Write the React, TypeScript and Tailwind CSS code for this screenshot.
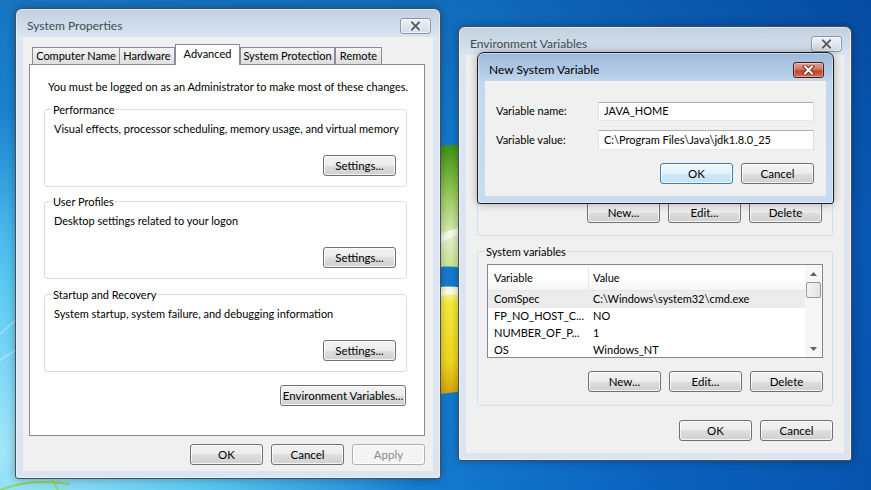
import type { ReactNode } from 'react';

type BtnProps = {
  label: string;
  width?: string;
  disabled?: boolean;
  isDefault?: boolean;
};

function Button({ label, width = 'w-[73px]', disabled = false, isDefault = false }: BtnProps) {
  const look = disabled
    ? 'border-[#adb2b5] bg-[#f4f4f4] text-[#8a8a8a]'
    : isDefault
    ? 'border-[#3c7fb1] bg-[linear-gradient(#eef7fd_0%,#e2f1fb_50%,#d0e8f8_50%,#c4e1f5_100%)] text-black'
    : 'border-[#707070] bg-[linear-gradient(#f3f3f3_0%,#ececec_50%,#dedede_50%,#d0d0d0_100%)] text-black';
  return (
    <button
      className={`h-[21px] shrink-0 whitespace-nowrap rounded-[3px] border ${width} ${look} text-[11.5px] leading-none shadow-[inset_0_0_0_1px_rgba(255,255,255,0.75)]`}
    >
      {label}
    </button>
  );
}

function XGlyph({ fg, halo }: { fg: string; halo: string }) {
  return (
    <svg width="13" height="10" viewBox="0 0 13 10">
      <path d="M3 1.5 L10 8.5 M10 1.5 L3 8.5" stroke={halo} strokeWidth="4" strokeLinecap="square" />
      <path d="M3 1.5 L10 8.5 M10 1.5 L3 8.5" stroke={fg} strokeWidth="2" strokeLinecap="square" />
    </svg>
  );
}

function CloseButton({ active }: { active: boolean }) {
  if (active) {
    return (
      <div className="flex h-[16px] w-[31px] items-center justify-center rounded-[3px] border border-[#47201a] bg-[linear-gradient(#e6a395_0%,#d67565_45%,#c2422d_55%,#d26e58_100%)] shadow-[inset_0_0_0_1px_rgba(255,255,255,0.35)]">
        <XGlyph fg="#ffffff" halo="#7a3025" />
      </div>
    );
  }
  return (
    <div className="flex h-[16px] w-[31px] items-center justify-center rounded-[3px] border border-[#8896a8] bg-[linear-gradient(#eef2f7_0%,#dfe6ee_50%,#d3dce7_100%)] shadow-[inset_0_0_0_1px_rgba(255,255,255,0.6)]">
      <XGlyph fg="#58626f" halo="#f4f6f9" />
    </div>
  );
}

function Frame({
  title,
  active = false,
  className,
  children,
}: {
  title: string;
  active?: boolean;
  className: string;
  children: ReactNode;
}) {
  const look = active
    ? 'border-[#1a1a1a] bg-[linear-gradient(#9db9da_0px,#b4cce7_20px,#c3d8ee_29px,#c7dcf1_100%)]'
    : 'border-[#474d55] bg-[linear-gradient(#c1d0e1_0px,#d2deeb_20px,#dbe6f2_29px,#dae5f1_100%)]';
  return (
    <div
      className={`absolute flex flex-col rounded-t-[7px] rounded-b-[3px] border ${look} shadow-[0_0_10px_rgba(0,0,0,0.3),inset_0_0_0_1px_rgba(255,255,255,0.45)] ${className}`}
    >
      <div className="flex h-[28px] shrink-0 items-start justify-between pl-[11px] pr-[9px] pt-[9px]">
        <span className={`-mt-px whitespace-nowrap text-[12px] leading-[17px] ${active ? 'text-black' : 'text-[#434b55]'}`}>
          {title}
        </span>
        <CloseButton active={active} />
      </div>
      <div className="flex min-h-0 flex-1 flex-col px-[7px] pb-[7px]">
        <div className="flex min-h-0 flex-1 flex-col bg-[#f0f0f0]">{children}</div>
      </div>
    </div>
  );
}

function GroupBox({
  label,
  className,
  children,
}: {
  label?: string;
  className: string;
  children: ReactNode;
}) {
  return (
    <div className={`relative flex flex-col rounded-[3px] border border-[#d5dfe5] ${className}`}>
      {label && (
        <span className="absolute -top-[8px] left-[7px] whitespace-nowrap bg-inherit px-[1px] leading-[15px]">
          {label}
        </span>
      )}
      {children}
    </div>
  );
}

const tabs = [
  { label: 'Computer Name', cls: 'w-[88px]' },
  { label: 'Hardware', cls: 'w-[56px] -ml-px' },
  { label: 'Advanced', cls: 'w-[65px]', selected: true },
  { label: 'System Protection', cls: 'w-[95px]' },
  { label: 'Remote', cls: 'w-[47px]' },
];

const sections = [
  {
    title: 'Performance',
    text: 'Visual effects, processor scheduling, memory usage, and virtual memory',
    gap: 'mt-[15px]',
  },
  { title: 'User Profiles', text: 'Desktop settings related to your logon', gap: 'mt-[14px]' },
  {
    title: 'Startup and Recovery',
    text: 'System startup, system failure, and debugging information',
    gap: 'mt-[15px]',
  },
];

const sysVars = [
  { name: 'ComSpec', value: 'C:\\Windows\\system32\\cmd.exe', selected: true },
  { name: 'FP_NO_HOST_C...', value: 'NO' },
  { name: 'NUMBER_OF_P...', value: '1' },
  { name: 'OS', value: 'Windows_NT' },
];

function Arrow({ down = false }: { down?: boolean }) {
  return (
    <svg width="7" height="4" viewBox="0 0 7 4">
      <path d={down ? 'M0 0 L7 0 L3.5 4 Z' : 'M0 4 L3.5 0 L7 4 Z'} fill="#606060" />
    </svg>
  );
}

function SystemProperties() {
  return (
    <Frame title="System Properties" className="left-[15px] top-[8px] h-[471px] w-[426px]">
      <div className="flex flex-col pl-[6px] pr-[8px] pt-[7px]">
        {/* Tabs */}
        <div className="relative z-10 -mb-px flex h-[21px] items-end pl-[3px]">
          {tabs.map((t) =>
            t.selected ? (
              <div
                key={t.label}
                className={`flex h-[21px] items-center justify-center whitespace-nowrap border border-b-0 border-[#898c95] bg-white pb-[2px] ${t.cls}`}
              >
                {t.label}
              </div>
            ) : (
              <div
                key={t.label}
                className={`flex h-[18px] items-center justify-center whitespace-nowrap border border-[#898c95] bg-[linear-gradient(#f4f4f4_0%,#e9e9e9_50%,#dedede_100%)] ${t.cls}`}
              >
                {t.label}
              </div>
            )
          )}
        </div>

        {/* Panel */}
        <div className="flex h-[372px] flex-col border border-[#898c95] bg-white pl-[14px] pr-[17px] pt-[14px]">
          <p className="whitespace-nowrap pl-[4px] leading-[15px]">
            You must be logged on as an Administrator to make most of these changes.
          </p>
          {sections.map((s) => (
            <GroupBox
              key={s.title}
              label={s.title}
              className={`h-[78px] bg-white pb-[10px] pl-[9px] pr-[10px] pt-[11px] ${s.gap}`}
            >
              <p className="whitespace-nowrap leading-[15px]">{s.text}</p>
              <div className="mt-auto flex justify-end">
                <Button label="Settings..." />
              </div>
            </GroupBox>
          ))}
          <div className="mr-[1px] mt-[13px] flex justify-end">
            <Button label="Environment Variables..." width="w-[126px]" />
          </div>
        </div>

        <div className="mt-[8px] flex justify-end gap-[8px]">
          <Button label="OK" />
          <Button label="Cancel" />
          <Button label="Apply" disabled />
        </div>
      </div>
    </Frame>
  );
}

function EnvironmentVariables() {
  return (
    <Frame title="Environment Variables" className="left-[458px] top-[26px] h-[435px] w-[394px]">
      <div className="flex flex-col px-[11px] pt-[10px]">
        {/* user variables: almost fully covered by the dialog */}
        <GroupBox className="h-[171px] bg-[#f0f0f0] pb-[12px] pl-[9px] pr-[10px] pt-[12px]">
          <div className="h-[94px] border border-[#828790] bg-white" />
          <div className="mt-auto flex justify-end gap-[8px]">
            <Button label="New..." />
            <Button label="Edit..." />
            <Button label="Delete" />
          </div>
        </GroupBox>

        <GroupBox label="System variables" className="mt-[15px] h-[155px] bg-[#f0f0f0] px-[9px] pt-[12px]">
          <div className="flex h-[94px] overflow-hidden border border-[#828790] bg-white">
            <div className="flex min-w-0 flex-1 flex-col">
              <div className="flex h-[26px] shrink-0 items-center border-b border-[#e5e5e5] bg-[linear-gradient(#ffffff_0%,#ffffff_55%,#f4f5f7_100%)] pt-[2px]">
                <div className="flex h-full w-[101px] items-center border-r border-[#e5e5e5] pl-[6px]">Variable</div>
                <div className="pl-[4px]">Value</div>
              </div>
              {sysVars.map((v) => (
                <div
                  key={v.name}
                  className={`flex h-[17px] shrink-0 items-center whitespace-nowrap ${v.selected ? 'bg-[#ececec]' : ''}`}
                >
                  <div className="w-[101px] pl-[6px]">{v.name}</div>
                  <div className="pl-[4px]">{v.value}</div>
                </div>
              ))}
            </div>
            {/* Scrollbar */}
            <div className="flex w-[17px] shrink-0 flex-col bg-[#f6f6f6]">
              <div className="flex h-[17px] items-center justify-center">
                <Arrow />
              </div>
              <div className="mx-[1px] h-[16px] rounded-[2px] border border-[#979797] bg-[linear-gradient(90deg,#f3f3f3,#e2e2e2)]" />
              <div className="flex-1" />
              <div className="flex h-[17px] items-center justify-center">
                <Arrow down />
              </div>
            </div>
          </div>
          <div className="mt-[13px] flex justify-end gap-[8px]">
            <Button label="New..." />
            <Button label="Edit..." />
            <Button label="Delete" />
          </div>
        </GroupBox>

        <div className="mt-[14px] flex justify-end gap-[8px]">
          <Button label="OK" />
          <Button label="Cancel" />
        </div>
      </div>
    </Frame>
  );
}

function NewSystemVariable() {
  return (
    <Frame title="New System Variable" active className="left-[477px] top-[52px] z-20 h-[152px] w-[357px]">
      <div className="flex flex-col pl-[11px] pr-[12px] pt-[21px]">
        <div className="flex h-[19px] items-center">
          <span className="w-[102px] shrink-0 whitespace-nowrap">Variable name:</span>
          <div className="flex h-full w-[219px] items-center whitespace-nowrap border border-[#abadb3] border-b-[#e3e9ef] border-l-[#e2e3ea] border-r-[#dbdfe6] bg-white pl-[5px]">
            JAVA_HOME
          </div>
        </div>
        <div className="mt-[9px] flex h-[20px] items-center">
          <span className="w-[102px] shrink-0 whitespace-nowrap">Variable value:</span>
          <div className="flex h-full w-[219px] items-center whitespace-nowrap border border-[#abadb3] border-b-[#e3e9ef] border-l-[#e2e3ea] border-r-[#dbdfe6] bg-white pl-[5px]">
            C:\Program Files\Java\jdk1.8.0_25
          </div>
        </div>
        <div className="mt-[13px] flex justify-end gap-[8px]">
          <Button label="OK" isDefault />
          <Button label="Cancel" />
        </div>
      </div>
    </Frame>
  );
}

function Wallpaper() {
  return (
    <svg className="absolute inset-0" width="871" height="490" viewBox="0 0 871 490">
      <defs>
        <linearGradient id="leaf" x1="0" y1="0" x2="0" y2="1">
          <stop offset="0" stopColor="#3d9216" />
          <stop offset="0.4" stopColor="#9ccd5c" />
          <stop offset="0.75" stopColor="#e4f2c2" />
          <stop offset="1" stopColor="#c6e48c" />
        </linearGradient>
        <linearGradient id="sun" x1="0" y1="0" x2="0" y2="1">
          <stop offset="0" stopColor="#fffbe0" />
          <stop offset="0.15" stopColor="#f8ec3c" />
          <stop offset="0.7" stopColor="#f2d81e" />
          <stop offset="1" stopColor="#d8a60c" />
        </linearGradient>
      </defs>
      <path d="M420 154 Q450 138 480 150 L480 272 Q450 262 420 270 Z" fill="url(#leaf)" />
      <path d="M424 252 Q450 226 478 232" stroke="#ffffff" strokeOpacity="0.75" strokeWidth="7" fill="none" />
      <path d="M420 290 Q450 282 480 292 L480 386 Q450 396 420 394 Z" fill="url(#sun)" />
      <path d="M424 300 Q450 286 478 296" stroke="#ffffff" strokeOpacity="0.7" strokeWidth="5" fill="none" />
      <path d="M0 334 L18 318 M0 360 L16 350" stroke="#ffffff" strokeOpacity="0.35" strokeWidth="1.5" />
      <path d="M0 490 Q30 478 70 484" stroke="#8fd44c" strokeWidth="2" fill="none" />
      <path d="M52 480 L58 490" stroke="#8fd44c" strokeWidth="1.5" />
    </svg>
  );
}

export default function App() {
  return (
    <div className="relative h-[490px] w-[871px] overflow-hidden bg-[linear-gradient(180deg,rgba(0,30,100,0.22)_0%,rgba(0,30,100,0)_45%),radial-gradient(ellipse_520px_430px_at_0%_92%,#a2e6fa_0%,#5ccaf2_38%,rgba(40,150,225,0)_80%),linear-gradient(100deg,#1e8edb_0%,#1784d6_45%,#0b64c0_75%,#0653ad_100%)] font-['Lato','Noto_Sans',sans-serif] text-[11px] text-black">
      <Wallpaper />
      <SystemProperties />
      <EnvironmentVariables />
      <NewSystemVariable />
    </div>
  );
}
